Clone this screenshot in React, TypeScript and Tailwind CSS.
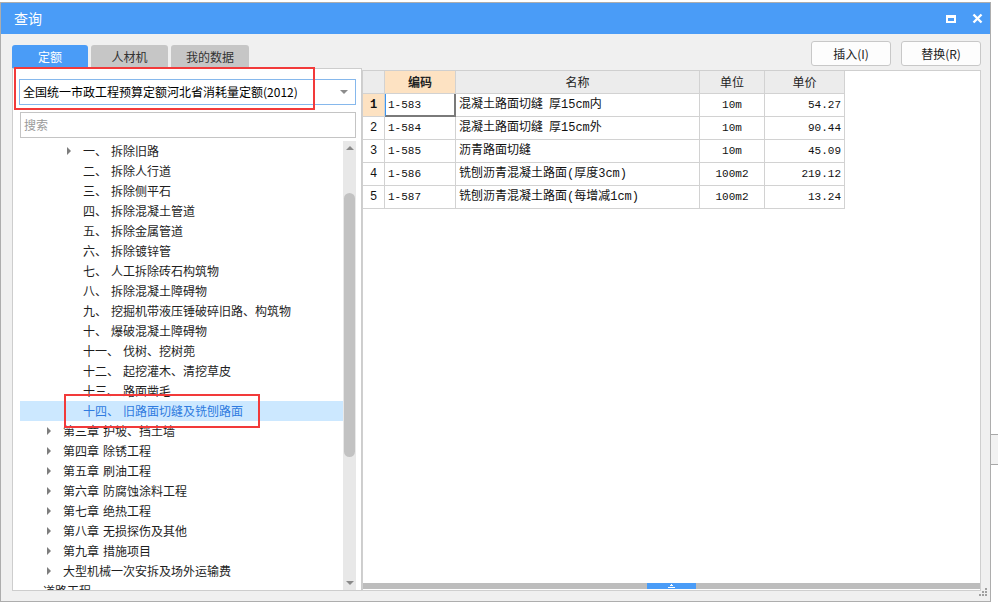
import React from "react";

const FONT = "font-['Noto_Sans_CJK_SC','Microsoft_YaHei',sans-serif]";
const MONO = "font-['Liberation_Mono','Noto_Sans_CJK_SC',monospace]";

type TreeItem = {
  no?: string;
  name: string;
  level: number;
  arrow?: boolean;
  selected?: boolean;
};

const TREE: TreeItem[] = [
  { no: "一、", name: "拆除旧路", level: 2, arrow: true },
  { no: "二、", name: "拆除人行道", level: 2 },
  { no: "三、", name: "拆除侧平石", level: 2 },
  { no: "四、", name: "拆除混凝土管道", level: 2 },
  { no: "五、", name: "拆除金属管道", level: 2 },
  { no: "六、", name: "拆除镀锌管", level: 2 },
  { no: "七、", name: "人工拆除砖石构筑物", level: 2 },
  { no: "八、", name: "拆除混凝土障碍物", level: 2 },
  { no: "九、", name: "挖掘机带液压锤破碎旧路、构筑物", level: 2 },
  { no: "十、", name: "爆破混凝土障碍物", level: 2 },
  { no: "十一、", name: "伐树、挖树蔸", level: 2 },
  { no: "十二、", name: "起挖灌木、清挖草皮", level: 2 },
  { no: "十三、", name: "路面凿毛", level: 2 },
  { no: "十四、", name: "旧路面切缝及铣刨路面", level: 2, selected: true },
  { no: "第三章", name: "护坡、挡土墙", level: 1, arrow: true },
  { no: "第四章", name: "除锈工程", level: 1, arrow: true },
  { no: "第五章", name: "刷油工程", level: 1, arrow: true },
  { no: "第六章", name: "防腐蚀涂料工程", level: 1, arrow: true },
  { no: "第七章", name: "绝热工程", level: 1, arrow: true },
  { no: "第八章", name: "无损探伤及其他", level: 1, arrow: true },
  { no: "第九章", name: "措施项目", level: 1, arrow: true },
  { name: "大型机械一次安拆及场外运输费", level: 1, arrow: true },
  { name: "道路工程", level: 0 },
];

const INDENT = ["pl-[7px]", "pl-[27px]", "pl-[47px]"];

const ROWS = [
  ["1", "1-583", "混凝土路面切缝\u2002厚15cm内", "10m", "54.27"],
  ["2", "1-584", "混凝土路面切缝\u2002厚15cm外", "10m", "90.44"],
  ["3", "1-585", "沥青路面切缝", "10m", "45.09"],
  ["4", "1-586", "铣刨沥青混凝土路面(厚度3cm)", "100m2", "219.12"],
  ["5", "1-587", "铣刨沥青混凝土路面(每增减1cm)", "100m2", "13.24"],
];

function Arrow() {
  return (
    <span className="block h-0 w-0 border-y-[4px] border-l-[4px] border-y-transparent border-l-[#7d7d7d]" />
  );
}

function TreeRow({ item }: { item: TreeItem }) {
  return (
    <div
      className={`flex h-[20px] shrink-0 items-center whitespace-nowrap text-[12px] ${INDENT[item.level]} ${
        item.selected ? "bg-[#cce8ff] text-[#2f7be0]" : "text-[#1e1e1e]"
      }`}
    >
      <span className="flex w-[16px] shrink-0 items-center">{item.arrow && <Arrow />}</span>
      {item.no && <span className="mr-[4px]">{item.no}</span>}
      <span>{item.name}</span>
    </div>
  );
}

function Scrollbar() {
  return (
    <div className="flex w-[13px] shrink-0 flex-col items-center bg-[#e8e8e8]">
      <div className="flex h-[14px] items-center justify-center">
        <span className="block h-0 w-0 border-x-[4px] border-b-[4px] border-x-transparent border-b-[#8a8a8a]" />
      </div>
      <div className="h-[38px]" />
      <div className="h-[264px] w-[11px] rounded-full bg-[#c2c2c2]" />
      <div className="flex-1" />
      <div className="flex h-[14px] items-center justify-center">
        <span className="block h-0 w-0 border-x-[4px] border-t-[4px] border-x-transparent border-t-[#8a8a8a]" />
      </div>
    </div>
  );
}

function LeftPanel() {
  return (
    <div className="flex h-[523px] w-[350px] shrink-0 flex-col border border-[#cdcdcd] bg-white pl-[6px] pr-[5px] pt-[10px]">
      <div className="flex h-[26px] items-center justify-between border border-[#86b8ec] px-[3px] text-[12px] text-black">
        <span>全国统一市政工程预算定额河北省消耗量定额(2012)</span>
        <span className="mr-[4px] block h-0 w-0 border-x-[4px] border-t-[4px] border-x-transparent border-t-[#8c8c8c]" />
      </div>
      <div className="ml-[1px] mt-[7px] flex h-[26px] items-center border border-[#c4c4c4] px-[3px] text-[12px] text-[#9a9a9a]">
        搜索
      </div>
      <div className="ml-[1px] mt-[3px] flex min-h-0 flex-1 overflow-hidden">
        <div className="flex min-w-0 flex-1 flex-col overflow-hidden">
          {TREE.map((item) => (
            <TreeRow key={item.name} item={item} />
          ))}
        </div>
        <Scrollbar />
      </div>
    </div>
  );
}

function DataTable() {
  const head = "flex items-center justify-center border-b border-r border-[#d2d2d2] bg-[#ececec] text-[12px] text-[#222]";
  const cell = "flex h-[23px] items-center border-b border-r border-[#d2d2d2] whitespace-nowrap text-[#111]";
  return (
    <div className="grid w-[482px] grid-cols-[22px_71px_244px_65px_80px] auto-rows-[23px]">
      <div className={head} />
      <div className={`${head} bg-[#fde2c2] font-bold`}>编码</div>
      <div className={head}>名称</div>
      <div className={head}>单位</div>
      <div className={head}>单价</div>
      {ROWS.map((r, i) => (
        <React.Fragment key={r[1]}>
          <div
            className={`${cell} justify-center text-[12px] ${MONO} ${
              i === 0 ? "bg-[#fde2c2] font-bold" : ""
            }`}
          >
            {r[0]}
          </div>
          <div className={`${cell} relative pl-[3px] text-[11px] ${MONO}`}>
            {r[1]}
            {i === 0 && (
              <div className="absolute -bottom-px -right-px left-0 top-0 border-b-2 border-l border-r-2 border-b-[#7a7a7a] border-l-[#3c96f0] border-r-[#7a7a7a]" />
            )}
          </div>
          <div className={`${cell} whitespace-pre pl-[3px] text-[12px] ${MONO}`}>{r[2]}</div>
          <div className={`${cell} justify-center text-[11px] ${MONO}`}>{r[3]}</div>
          <div className={`${cell} justify-end pr-[3px] text-[11px] ${MONO}`}>{r[4]}</div>
        </React.Fragment>
      ))}
    </div>
  );
}

function RightPanel() {
  return (
    <div className="mt-[2px] flex h-[521px] min-w-0 flex-1 flex-col border border-[#cfcfcf] bg-white">
      <DataTable />
      <div className="mb-[1px] mt-auto flex h-[6px] bg-[#bdbdbd]">
        <div className="ml-[284px] flex w-[49px] items-center justify-center bg-[#4a9cf7]">
          <svg width="7" height="4" viewBox="0 0 7 4">
            <path d="M3 0h1v1h1v1H2V1h1z M0 3h7v1H0z" fill="white" />
          </svg>
        </div>
      </div>
    </div>
  );
}

export default function App() {
  return (
    <div className={`relative h-[608px] w-[998px] overflow-hidden bg-white ${FONT}`}>
      {/* something behind the dialog, on the right */}
      <div className="absolute left-[991px] top-[434px] h-[31px] w-[7px] border-y border-[#a8a8a8] bg-[#f2f2f2]" />

      <div className="relative mt-[2px] flex h-[600px] w-[991px] flex-col border border-[#adadad] bg-[#f0f0f0]">
        {/* Title bar */}
        <div className="flex h-[31px] shrink-0 items-center justify-between bg-[#4a9cf7] pl-[13px] pr-[7px]">
          <span className="text-[14px] text-white">查询</span>
          <div className="flex items-center gap-[16px]">
            <div className="h-[8px] w-[10px] border-2 border-t-[3px] border-white" />
            <svg width="11" height="11" viewBox="0 0 11 11">
              <path d="M1.5 1.5l8 8M9.5 1.5l-8 8" stroke="white" strokeWidth="2.4" />
            </svg>
          </div>
        </div>

        {/* Body */}
        <div className="flex flex-1 flex-col pl-[11px] pr-[9px]">
          <div className="flex h-[34px] shrink-0 justify-between">
            <div className="flex gap-[3px] self-end text-[12px]">
              <div className="flex h-[23px] w-[76px] items-center justify-center rounded-t-[3px] bg-[#4a9cf7] text-white">
                定额
              </div>
              <div className="flex h-[23px] w-[77px] items-center justify-center rounded-t-[3px] bg-[#c6c6c6] text-[#333]">
                人材机
              </div>
              <div className="flex h-[23px] w-[78px] items-center justify-center rounded-t-[3px] bg-[#c6c6c6] text-[#333]">
                我的数据
              </div>
            </div>
            <div className="flex gap-[10px] pt-[7px] text-[12px] text-[#222]">
              <div className="flex h-[25px] w-[80px] items-center justify-center rounded-[3px] border border-[#c8c8c8] bg-[#fdfdfd]">
                插入(I)
              </div>
              <div className="flex h-[25px] w-[80px] items-center justify-center rounded-[3px] border border-[#c8c8c8] bg-[#fdfdfd]">
                替换(R)
              </div>
            </div>
          </div>

          <div className="flex">
            <LeftPanel />
            <RightPanel />
          </div>
        </div>

        {/* resize grip */}
        <svg className="absolute bottom-[4px] right-[2px]" width="9" height="9" viewBox="0 0 9 9">
          <rect x="6" y="0" width="2" height="2" fill="#a0a0a0" />
          <rect x="3" y="3" width="2" height="2" fill="#a0a0a0" />
          <rect x="6" y="3" width="2" height="2" fill="#a0a0a0" />
          <rect x="0" y="6" width="2" height="2" fill="#a0a0a0" />
          <rect x="3" y="6" width="2" height="2" fill="#a0a0a0" />
          <rect x="6" y="6" width="2" height="2" fill="#a0a0a0" />
        </svg>
      </div>

      {/* red annotation boxes */}
      <div className="absolute left-[14px] top-[67px] h-[43px] w-[301px] border-2 border-[#f23a3a]" />
      <div className="absolute left-[64px] top-[394px] h-[34px] w-[196px] border-2 border-[#f23a3a]" />
    </div>
  );
}
